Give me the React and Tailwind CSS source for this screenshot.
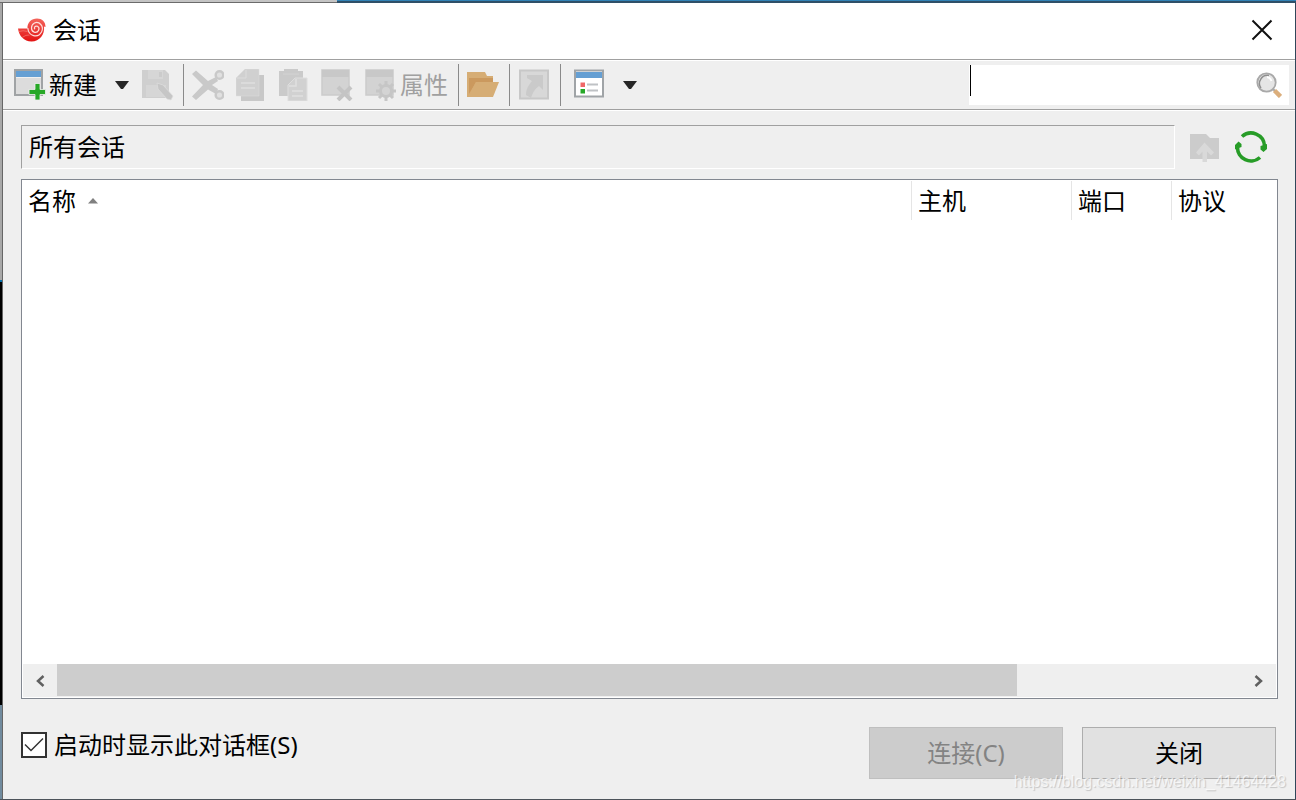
import React from "react";

const svgProps = { viewBox: "0 0 32 32", className: "block size-8", "aria-hidden": true };

function ShellLogo() {
  return (
    <svg viewBox="0 0 28 24" className="h-6 w-7" aria-hidden="true">
      <defs>
        <linearGradient id="shell" x1="0" y1="0" x2="0" y2="1">
          <stop offset="0" stopColor="#f4655c" />
          <stop offset="1" stopColor="#e31313" />
        </linearGradient>
      </defs>
      <path d="M0 10.500 L9.500 10.500 C9 4.500 13.500 .5 19 .5 C24 .5 27.500 3.500 27.500 9 L26 8.500 C27 16.500 21.500 23.500 13.500 23.500 C6 23.500 1 18 0 10.500 Z" fill="url(#shell)" />
      <path d="M9.800 10 C10.500 18.500 20 20.500 23.500 14 C26.500 8 21 3 16.500 5 C12.500 7 12.500 13 16.500 14.300 C20.500 15 22.500 10 19.500 8.300 C17 7.300 15.500 10 17 11.200" fill="none" stroke="#fde0dd" strokeWidth="1.200" />
      <path d="M1 13.500 Q5 12 9.500 13.500 M4 19.500 Q8 16.500 11.500 17" fill="none" stroke="#f98b83" strokeWidth=".6" />
    </svg>
  );
}

function NewIcon() {
  return (
    <svg {...svgProps}>
      <rect x="1" y="1" width="27" height="25" fill="#dcdcdc" stroke="#a0a3a5" strokeWidth="2" />
      <rect x="2" y="2" width="25" height="6" fill="#659fd3" />
      <rect x="2" y="8" width="25" height="1" fill="#f0f0f0" />
      <path d="M21 14.500H26V20.500H31.500V25.500H26V31H21V25.500H15V20.500H21Z" fill="#27a827" stroke="#efefef" strokeWidth=".8" />
    </svg>
  );
}

function SaveIcon() {
  return (
    <svg {...svgProps}>
      <path d="M0 1H23L27 5V29H0Z" fill="#cfcfcf" />
      <path d="M6 1H21V10H6ZM4 16H24V28H4Z" fill="#d6d6d6" />
      <path d="M17 3H20V8H17Z" fill="#cbcbcb" />
      <path d="M15 14L21 16L31 27L29 31L25 30L16 20Z" fill="#c6c6c6" stroke="#dedede" strokeWidth=".7" />
    </svg>
  );
}

function CutIcon() {
  return (
    <svg {...svgProps}>
      <path d="M0 5L4 1.500L16 12L24 8L26 12L20 16L26 20L24 25L16 20.500L4 31L0 27.500L11 16Z" fill="#c9c9c9" />
      <circle cx="27.500" cy="6" r="3.800" fill="#e0e0e0" stroke="#c9c9c9" strokeWidth="2.500" />
      <circle cx="27.500" cy="26" r="3.800" fill="#e0e0e0" stroke="#c9c9c9" strokeWidth="2.500" />
    </svg>
  );
}

function CopyIcon() {
  return (
    <svg viewBox="0 0 30 32" className="block h-8 w-[30px]" aria-hidden="true">
      <path d="M7 6H28V32H5V26Z" fill="#c8c8c8" />
      <path d="M9 0H23V27H0V9Z" fill="#d0d0d0" stroke="#dcdcdc" strokeWidth=".5" />
      <path d="M10 1V9H1" fill="none" stroke="#dcdcdc" strokeWidth="1" />
      <path d="M5 14H19M5 19H19" stroke="#dedede" strokeWidth="1.500" />
    </svg>
  );
}

function PasteIcon() {
  return (
    <svg viewBox="0 0 30 32" className="block h-8 w-[30px]" aria-hidden="true">
      <path d="M0 2H5V0H19V2H24V27H0Z" fill="#cacaca" />
      <path d="M4 5H20" stroke="#d3d3d3" />
      <path d="M16 9H28V32H9V16Z" fill="#d1d1d1" stroke="#dedede" />
      <path d="M17 10V17H10M13 22H24M13 27H24" fill="none" stroke="#dfdfdf" strokeWidth="1.500" />
    </svg>
  );
}

function PaneBase() {
  return (
    <>
      <rect x="1" y="1" width="27" height="25" fill="#d3d3d3" stroke="#cbcbcb" strokeWidth="1.500" />
      <rect x="1" y="1" width="27" height="7" fill="#c8c8c8" />
    </>
  );
}

function DeleteIcon() {
  return (
    <svg {...svgProps}>
      <PaneBase />
      <path d="M17 18L30 31M30 18L17 31" stroke="#c4c4c4" strokeWidth="4" />
    </svg>
  );
}

function PropertiesIcon() {
  return (
    <svg {...svgProps}>
      <PaneBase />
      <path d="M21 12V32M11 22H31M14 15L28 29M28 15L14 29" stroke="#c6c6c6" strokeWidth="3" />
      <circle cx="21" cy="22" r="5.500" fill="#d4d4d4" stroke="#c6c6c6" strokeWidth="3" />
    </svg>
  );
}

function FolderIcon() {
  return (
    <svg {...svgProps}>
      <path d="M0 3H18L20 7H26V28H0Z" fill="#d6ad75" />
      <path d="M2 9H26V13H9L2 25Z" fill="#cb995e" />
      <path d="M9 13H32L26 28H1Z" fill="#d6ad75" />
    </svg>
  );
}

function ShortcutIcon() {
  return (
    <svg {...svgProps}>
      <rect x="2" y="1.500" width="28" height="28" fill="#d8d8d8" stroke="#c8c8c8" strokeWidth="2" />
      <path d="M9 6H25V21L21 17C17 20 15 23 13 29L8 26C8 20 10 17 14 12L9 9Z" fill="#cacaca" />
    </svg>
  );
}

function ViewIcon() {
  return (
    <svg {...svgProps}>
      <rect x="2" y="1.500" width="28" height="26" fill="#fff" stroke="#a0a4a7" strokeWidth="2" />
      <rect x="3" y="3" width="26" height="6" fill="#659fd3" />
      <path d="M7.500 13.500H12V18H7.500Z" fill="#ef6868" />
      <path d="M7.500 20H12V24.500H7.500Z" fill="#27a827" />
      <path d="M14 15.500H25M14 21.500H25" stroke="#bfc2c5" strokeWidth="2" />
    </svg>
  );
}

function Magnifier() {
  return (
    <svg viewBox="0 0 26 26" className="block size-[26px]" aria-hidden="true">
      <path d="M16 16L20 20" stroke="#a7a7a7" strokeWidth="2" />
      <path d="M18.500 18.500L24.500 24.500" stroke="#dbae7c" strokeWidth="4.500" />
      <circle cx="10.500" cy="10.500" r="9.200" fill="#e5e5e5" stroke="#a9a9a9" strokeWidth="1.800" />
      <path d="M5 16A8 8 0 0 1 13 3.500" fill="none" stroke="#8f8f8f" strokeWidth="1.500" />
      <path d="M11 5Q14.500 5.500 15.500 9" fill="none" stroke="#fff" strokeWidth="1.800" />
    </svg>
  );
}

function UpFolderIcon() {
  return (
    <svg {...svgProps}>
      <path d="M1 3H17L21 7H30V28H1Z" fill="#cccccc" />
      <path d="M15.500 11.500L25 21.500L22 24.500L18 20.500V31H13.500V20.500L10 24.500L7 21.500Z" fill="#d9d9d9" />
    </svg>
  );
}

function RefreshIcon() {
  return (
    <svg {...svgProps}>
      <path d="M7 5.500A13.500 13.500 0 0 1 29.500 15" fill="none" stroke="#279c27" strokeWidth="3.600" />
      <path d="M25 26.500A13.500 13.500 0 0 1 2.500 16" fill="none" stroke="#279c27" strokeWidth="3.600" />
      <path d="M25.500 15L32 13V18L28.500 21L25.500 18.500ZM6.500 16L0 18.500V14L3.500 10.500L6.500 13Z" fill="#279c27" />
    </svg>
  );
}

function Caret() {
  return (
    <svg viewBox="0 0 14 8" className="block h-2 w-3.5" aria-hidden="true">
      <path d="M0 0H14L8 8H6Z" fill="#262626" />
    </svg>
  );
}

function Chevron({ d }) {
  return (
    <svg viewBox="0 0 10 12" className="block h-3 w-2.5" aria-hidden="true">
      <path d={d} fill="none" stroke="#606060" strokeWidth="2.500" />
    </svg>
  );
}

function ToolButton({ label, disabled, children, className = "" }) {
  return (
    <button type="button" aria-label={label} disabled={disabled} className={`flex shrink-0 items-center ${className}`}>
      {children}
    </button>
  );
}

const Divider = () => <span className="h-[42px] w-px shrink-0 bg-[#8a8a8a]" />;

function Toolbar() {
  return (
    <div className="flex h-[51px] shrink-0 items-center border-b border-white bg-[#efefef] pr-1.5 pl-[11px] shadow-[inset_0_1px_0_#fff,inset_0_-1px_0_#a0a0a0]">
      <ToolButton className="gap-[3px]">
        <NewIcon />
        <span>新建</span>
      </ToolButton>
      <ToolButton label="新建选项" className="ml-[18px]"><Caret /></ToolButton>
      <ToolButton label="另存为" disabled className="ml-[13px]"><SaveIcon /></ToolButton>
      <div className="ml-[9px] flex"><Divider /></div>
      <div className="ml-2 flex items-center gap-3">
        <ToolButton label="剪切" disabled><CutIcon /></ToolButton>
        <ToolButton label="复制" disabled><CopyIcon /></ToolButton>
        <div className="flex items-center gap-3 pl-px">
          <ToolButton label="粘贴" disabled><PasteIcon /></ToolButton>
          <ToolButton label="删除" disabled><DeleteIcon /></ToolButton>
          <ToolButton disabled className="gap-[3px] text-[#a0a0a0]">
            <PropertiesIcon />
            <span>属性</span>
          </ToolButton>
        </div>
      </div>
      <div className="ml-[10px] flex items-center gap-2">
        <Divider />
        <ToolButton label="文件夹"><FolderIcon /></ToolButton>
        <span className="flex pl-0.5"><Divider /></span>
        <ToolButton label="快捷方式" disabled><ShortcutIcon /></ToolButton>
        <span className="flex pl-0.5"><Divider /></span>
      </div>
      <ToolButton label="查看" className="ml-3"><ViewIcon /></ToolButton>
      <ToolButton label="查看选项" className="ml-[18px]"><Caret /></ToolButton>
      <div className="ml-auto flex h-10 w-80 items-center bg-white pr-[7px] pl-px">
        <span className="h-[31px] w-px self-start bg-black" />
        <input type="text" aria-label="搜索" className="h-full min-w-0 flex-1 bg-transparent px-1 outline-none" />
        <button type="button" aria-label="开始搜索"><Magnifier /></button>
      </div>
    </div>
  );
}

function SessionList() {
  return (
    <div className="flex min-h-0 flex-1 flex-col border border-[#828790] bg-white">
      <div className="min-h-0 flex-1 pt-px">
        <table className="w-full table-fixed border-separate border-spacing-0 text-left">
          <colgroup>
            <col />
            <col className="w-40" />
            <col className="w-[100px]" />
            <col className="w-[105px]" />
          </colgroup>
          <thead>
            <tr>
              <th className="h-[39px] border-r border-[#e5e5e5] p-0 pl-1.5 align-middle font-normal">
                <span className="flex h-[39px] items-center gap-3">
                  名称
                  <svg viewBox="0 0 10 6" className="h-1.5 w-2.5" aria-hidden="true">
                    <path d="M0 5.500L5 0L10 5.500Z" fill="#808080" />
                  </svg>
                </span>
              </th>
              <th className="h-[39px] border-r border-[#e5e5e5] p-0 pl-1.5 align-middle font-normal">主机</th>
              <th className="h-[39px] border-r border-[#e5e5e5] p-0 pl-1.5 align-middle font-normal">端口</th>
              <th className="h-[39px] p-0 pl-1.5 align-middle font-normal">协议</th>
            </tr>
          </thead>
          <tbody />
        </table>
      </div>
      <div className="mx-px mb-px flex h-[33px] shrink-0 bg-[#efefef]">
        <button type="button" aria-label="向左滚动" className="flex w-[34px] items-center justify-center">
          <Chevron d="M8.500 1L3 6L8.500 11" />
        </button>
        <div className="flex-1">
          <div className="h-8 w-[81%] bg-[#cdcdcd]" />
        </div>
        <button type="button" aria-label="向右滚动" className="flex w-[34px] items-center justify-center">
          <Chevron d="M1.500 1L7 6L1.500 11" />
        </button>
      </div>
    </div>
  );
}

export default function App() {
  return (
    <div className="relative flex h-screen flex-col bg-[#555a60] font-['Noto_Sans','Noto_Sans_CJK_SC',sans-serif] text-[24px] leading-8 text-black">
      <div className="flex h-[3px] shrink-0">
        <div className="w-[26%] border-b border-[#6b6b6b] bg-[#c4c4c4]" />
        <div className="flex-1 border-b-2 border-[#2f5068] bg-[#3182b6]" />
      </div>
      <div className="flex min-h-0 flex-1">
        <div className="flex w-[3px] shrink-0 flex-col border-r border-[#666]">
          <div className="h-[277px] bg-[#a8a8a8]" />
          <div className="h-0.5 bg-[#0870a8]" />
          <div className="flex-1 bg-black" />
          <div className="h-[94px] bg-[#718b9e]" />
        </div>
        <main className="flex min-w-0 flex-1 flex-col bg-[#efefef]">
          <header className="flex h-[57px] shrink-0 items-center border-b border-[#a0a0a0] bg-white pr-[22px] pb-0.5 pl-[15px]">
            <ShellLogo />
            <h1 className="ml-[7px]">会话</h1>
            <button type="button" aria-label="关闭窗口" className="ml-auto">
              <svg viewBox="0 0 22 22" className="block size-[22px]" aria-hidden="true">
                <path d="M1.500 1.500L20.500 20.500M20.500 1.500L1.500 20.500" stroke="#111" strokeWidth="2" />
              </svg>
            </button>
          </header>
          <Toolbar />
          <div className="flex min-h-0 flex-1 flex-col pt-3.5 pr-[17px] pb-5 pl-[18px]">
            <div className="flex shrink-0 items-center">
              <div className="flex h-11 flex-1 items-center border border-t-[#a0a0a0] border-r-white border-b-white border-l-[#a0a0a0] pl-[7px]">
                所有会话
              </div>
              <div className="ml-3.5 flex gap-3.5 pr-[11px]">
                <ToolButton label="上一级" disabled><UpFolderIcon /></ToolButton>
                <ToolButton label="刷新"><RefreshIcon /></ToolButton>
              </div>
            </div>
            <div className="mt-2.5 flex min-h-0 flex-1 flex-col">
              <SessionList />
            </div>
            <footer className="mt-7 flex h-[52px] shrink-0 items-start">
              <label className="mt-0.5 flex items-center gap-[7px]">
                <span className="grid size-[26px] place-items-center">
                  <input type="checkbox" defaultChecked className="peer col-start-1 row-start-1 size-[26px] appearance-none border-2 border-[#333] bg-white" />
                  <svg viewBox="0 0 20 16" className="pointer-events-none invisible col-start-1 row-start-1 h-4 w-5 peer-checked:visible" aria-hidden="true">
                    <path d="M1 7.500L7 13.500L19 1.500" fill="none" stroke="#333" strokeWidth="1.500" />
                  </svg>
                </span>
                启动时显示此对话框(S)
              </label>
              <button type="button" disabled className="ml-auto h-[52px] w-[194px] border border-[#bfbfbf] bg-[#cccccc] text-[#838383]">连接(C)</button>
              <button type="button" className="mr-0.5 ml-[19px] h-[52px] w-[194px] border border-[#adadad] bg-[#e1e1e1]">关闭</button>
            </footer>
          </div>
        </main>
        <div className="w-px shrink-0 bg-[#30475a]" />
      </div>
      <div className="h-px shrink-0 bg-[#4d535a]" />
      <span className="pointer-events-none absolute right-2.5 bottom-2 font-['Liberation_Sans',sans-serif] text-[16px] leading-5 text-white/70 [text-shadow:1px_1px_1px_rgb(0_0_0/0.18)]">
        https://blog.csdn.net/weixin_41464428
      </span>
    </div>
  );
}
